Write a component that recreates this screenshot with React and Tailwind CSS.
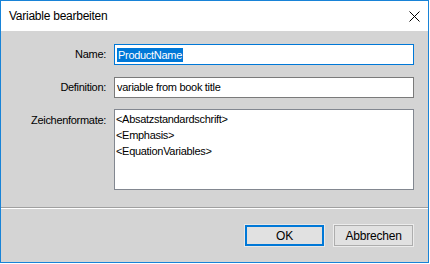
import React from 'react';

const font = { fontFamily: '"Liberation Sans", Arial, sans-serif' };

function Label({ children, className = '' }) {
  return (
    <div className={`w-[105px] shrink-0 text-right text-[11px] tracking-[-0.3px] text-black ${className}`}>
      {children}
    </div>
  );
}

export default function App() {
  return (
    <div className="w-[430px] h-[264px] bg-white" style={font}>
      <div className="w-[429px] h-[263px] border border-[#1883d7] flex flex-col">
        {/* title bar */}
        <div className="h-[30px] bg-white flex items-center justify-between pl-[8px] pr-[8px]">
          <span className="text-[12px] tracking-[-0.25px] text-black">Variable bearbeiten</span>
          <svg width="11" height="11" viewBox="0 0 11 11">
            <path d="M0.5 0.5 L10.5 10.5 M10.5 0.5 L0.5 10.5" stroke="#000" strokeWidth="1" />
          </svg>
        </div>

        {/* body */}
        <div className="flex-1 bg-[#d4d4d4] flex flex-col">
          <div className="flex flex-col pt-[13px]">
            <div className="flex items-center">
              <Label>Name:</Label>
              <div className="ml-[8px] w-[300px] h-[21px] border border-[#0078d7] bg-white flex items-center pl-[2px]">
                <span className="bg-[#0078d7] text-white text-[11px] tracking-[-0.3px] leading-[14px] px-[1px]">
                  ProductName
                </span>
              </div>
            </div>

            <div className="flex items-center mt-[12px]">
              <Label>Definition:</Label>
              <div className="ml-[8px] w-[300px] h-[21px] border border-[#7a7a7a] bg-white flex items-center pl-[2px] text-[11px] tracking-[-0.3px] text-black">
                variable from book title
              </div>
            </div>

            <div className="flex items-start mt-[11px]">
              <Label className="pt-[3px] leading-[16px]">Zeichenformate:</Label>
              <div className="ml-[8px] w-[300px] h-[81px] border border-[#828790] bg-white pt-[1px] pl-[1px] text-[11px] tracking-[-0.3px] leading-[16px] text-black">
                <div>&lt;Absatzstandardschrift&gt;</div>
                <div>&lt;Emphasis&gt;</div>
                <div>&lt;EquationVariables&gt;</div>
              </div>
            </div>
          </div>

          {/* separator */}
          <div className="mt-[17px] h-[1px] bg-[#a0a0a0]" />
          <div className="h-[1px] bg-white" />

          {/* buttons */}
          <div className="flex justify-end gap-[8px] pr-[14px] mt-[15px]">
            <button className="w-[81px] h-[23px] bg-[#e1e1e1] border border-[#e8e8e8] shadow-[inset_0_0_0_2px_#0078d7] text-[12px] tracking-[-0.2px] text-black">
              OK
            </button>
            <button className="w-[81px] h-[23px] bg-[#e1e1e1] border border-[#ececec] shadow-[inset_0_0_0_1px_#adadad] text-[12px] tracking-[-0.2px] text-black">
              Abbrechen
            </button>
          </div>
        </div>
      </div>
    </div>
  );
}
